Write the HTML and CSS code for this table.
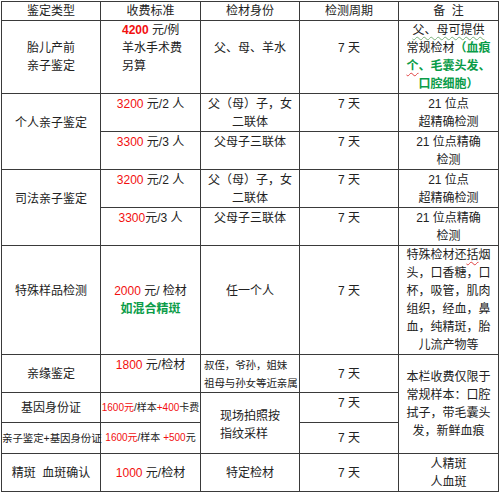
FILE: index.html
```html
<!DOCTYPE html>
<html lang="zh-CN">
<head>
<meta charset="utf-8">
<title>鉴定收费标准</title>
<link rel="stylesheet" href="styles.css">
</head>
<body>
<div class="page">
<table class="fee">
  <colgroup><col class="c1"><col class="c2"><col class="c3"><col class="c4"><col class="c5"></colgroup>
  <tr class="h-head">
    <th>鉴定类型</th><th>收费标准</th><th>检材身份</th><th>检测周期</th><th>备&nbsp; 注</th>
  </tr>
  <tr class="h-prenatal">
    <td>胎儿产前<br>亲子鉴定</td>
    <td class="up lead"><span class="red b">4200</span> 元/例<br>羊水手术费<br>另算</td>
    <td class="up">父、母、羊水</td>
    <td class="up">7 天</td>
    <td><span class="wavy-g">父、母可提供</span><br>常规检材<span class="green">（血痕<br><span class="wavy-r">个</span>、毛囊头发、<br>口腔细胞）</span></td>
  </tr>
  <tr class="h-pa">
    <td rowspan="2" class="up">个人亲子鉴定</td>
    <td class="top"><span class="red">3200</span> 元/2 人</td>
    <td class="top">父（母）子，女<br>二联体</td>
    <td class="top">7 天</td>
    <td class="top">21 位点<br>超精确检测</td>
  </tr>
  <tr class="h-pb">
    <td class="top"><span class="red">3300</span> 元/3 人</td>
    <td class="top">父母子三联体</td>
    <td class="top">7 天</td>
    <td class="top">21 位点精确<br>检测</td>
  </tr>
  <tr class="h-fa">
    <td rowspan="2" class="up">司法亲子鉴定</td>
    <td class="top"><span class="red">3200</span> 元/2 人</td>
    <td class="top">父（母）子，女<br>二联体</td>
    <td class="top">7 天</td>
    <td class="top">21 位点<br>超精确检测</td>
  </tr>
  <tr class="h-fb">
    <td class="top"><span class="red">3300</span>元/3 人</td>
    <td class="top">父母子三联体</td>
    <td class="top">7 天</td>
    <td class="top">21 位点精确<br>检测</td>
  </tr>
  <tr class="h-special">
    <td class="up">特殊样品检测</td>
    <td><span class="red">2000</span> 元/ 检材<br><span class="green">如混合精斑</span></td>
    <td class="up">任一个人</td>
    <td class="up">7 天</td>
    <td>特殊检材还<span class="wavy-r">括</span>烟<br>头，口香糖，口<br>杯，吸管，肌肉<br>组织，经血，鼻<br>血，纯精斑，胎<br>儿流产物等</td>
  </tr>
  <tr class="h-kin">
    <td>亲缘鉴定</td>
    <td class="top"><span class="red">1800</span> 元/检材</td>
    <td class="top small left">叔侄，爷孙，姐妹<br>祖母与孙女等近亲属</td>
    <td>7 天</td>
    <td rowspan="3">本栏收费仅限于<br>常规样本：口腔<br>拭子，带毛囊头<br>发，新鲜血痕</td>
  </tr>
  <tr class="h-gene">
    <td>基因身份证</td>
    <td class="tiny"><span class="red">1600元</span>/样本<span class="red">+400</span>卡费</td>
    <td rowspan="2"><span class="block-left">现场拍照按<br>指纹采样</span></td>
    <td class="top">7 天</td>
  </tr>
  <tr class="h-both">
    <td class="small nowrap">亲子鉴定+基因身份证</td>
    <td class="tiny"><span class="red">1600元</span>/样本 <span class="red">+500</span>元</td>
    <td>7 天</td>
  </tr>
  <tr class="h-stain">
    <td>精斑 &nbsp;血斑确认</td>
    <td><span class="red">1000</span> 元/检材</td>
    <td>特定检材</td>
    <td>7 天</td>
    <td>人精斑<br>人血斑</td>
  </tr>
</table>
</div>
</body>
</html>
```
FILE: styles.css
```css
body {
  margin: 0;
  background: #ffffff;
  font-family: "Liberation Sans", "Noto Sans CJK SC", sans-serif;
  font-size: 12px;
  color: #222222;
}

.page {
  padding: 1px 0 0 1px;
}

.fee {
  border-collapse: collapse;
  table-layout: fixed;
  width: 497px;
}

.c1 { width: 99px; }
.c2 { width: 100px; }
.c3 { width: 99px; }
.c4 { width: 99px; }
.c5 { width: 100px; }

.fee th,
.fee td {
  border: 1px solid #3a3a3a;
  padding: 0;
  line-height: 18px;
  text-align: center;
  vertical-align: middle;
  font-weight: normal;
  white-space: nowrap;
}

.h-head { height: 17px; }
.h-prenatal { height: 73px; }
.h-pa { height: 37px; }
.h-pb { height: 35px; }
.h-fa { height: 36px; }
.h-fb { height: 36px; }
.h-special { height: 109px; }
.h-kin { height: 36px; }
.h-gene { height: 30px; }
.h-both { height: 31px; }
.h-stain { height: 38px; }

.fee td.up {
  padding-bottom: 18px;
}

.fee td.top {
  vertical-align: top;
  padding-top: 1px;
}

.fee td.lead {
  text-align: left;
  padding-left: 21px;
}

.fee td.left {
  text-align: left;
  padding-left: 3px;
}

.small {
  font-size: 10.5px;
  letter-spacing: -0.1px;
}

.tiny {
  font-size: 10px;
}

.block-left {
  display: inline-block;
  text-align: left;
  padding-top: 3px;
}

.red {
  color: #f21010;
}

.b {
  font-weight: bold;
}

.green {
  color: #0a9c48;
  font-weight: bold;
}

.wavy-g {
  text-decoration: underline wavy #7ab07a;
  text-decoration-thickness: 1px;
  text-underline-offset: 2px;
}

.wavy-r {
  text-decoration: underline wavy #e04040;
  text-decoration-thickness: 1px;
  text-underline-offset: 2px;
}
```
